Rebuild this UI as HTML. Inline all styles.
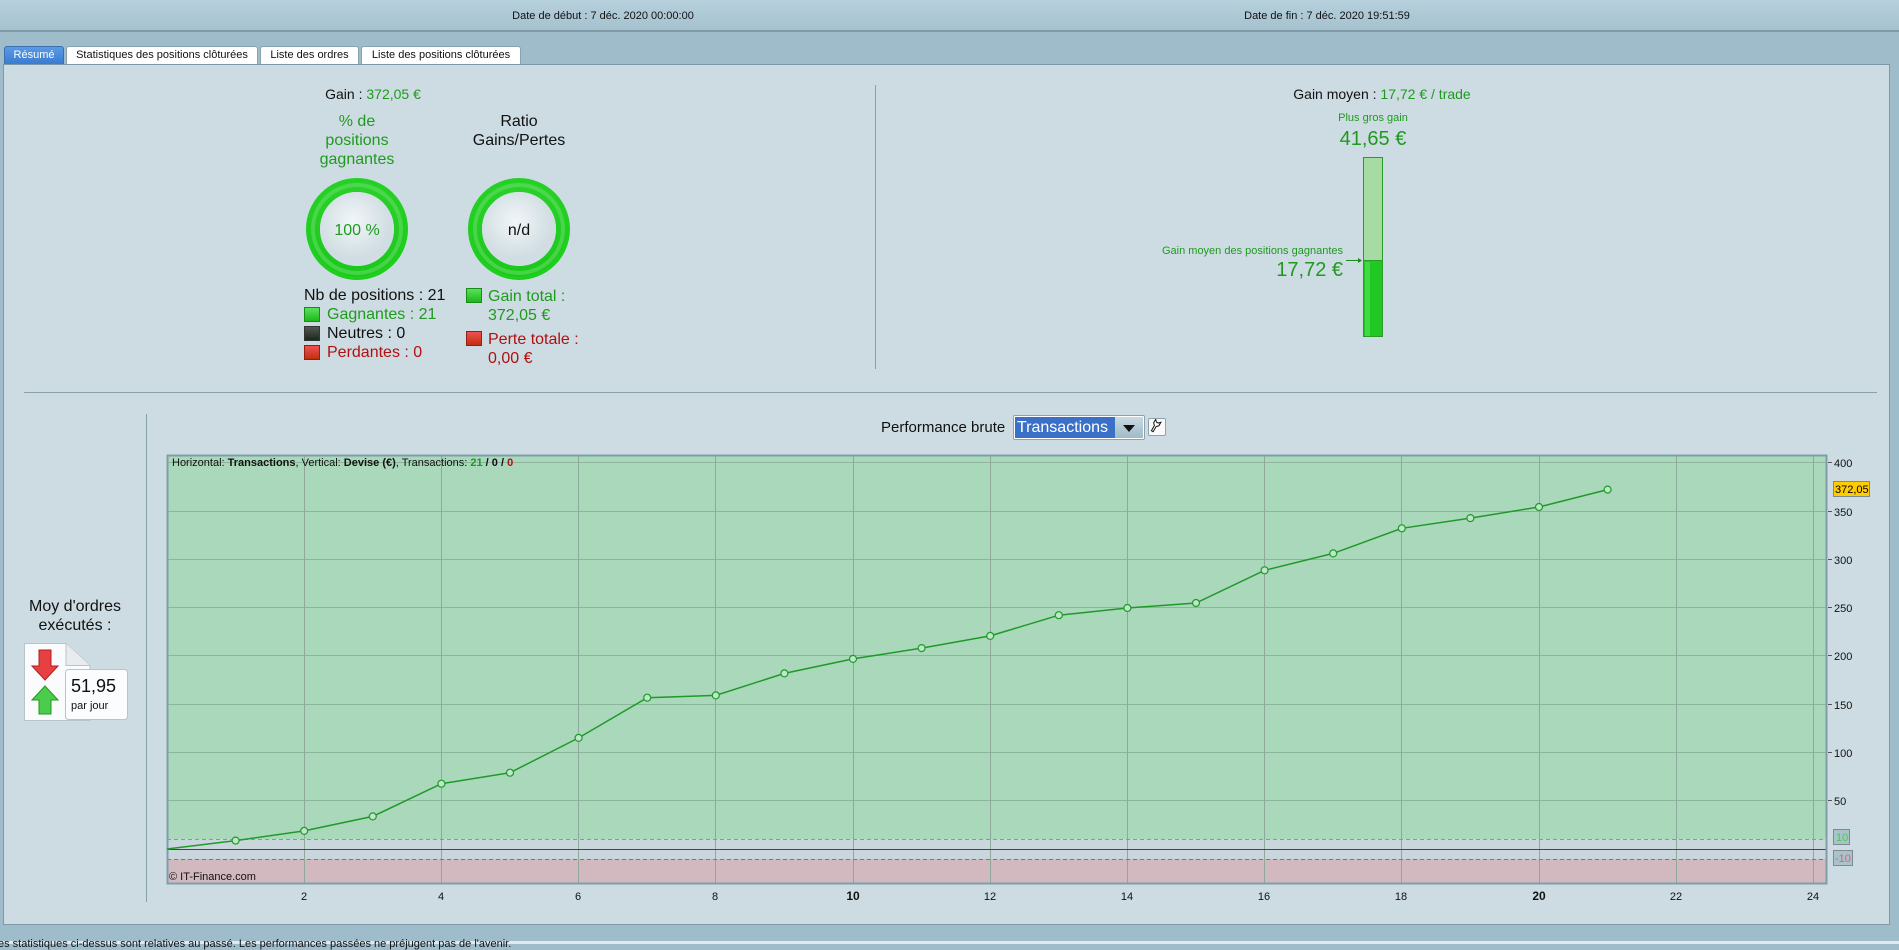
<!DOCTYPE html>
<html><head><meta charset="utf-8"><style>
*{margin:0;padding:0;box-sizing:border-box}
body{width:1899px;height:944px;overflow:hidden;background:#9fbccb;font-family:"Liberation Sans",sans-serif;position:relative;color:#111}
.a{position:absolute;white-space:nowrap}
.g{color:#1f9a1f}.r{color:#b01010}
.tab{position:absolute;top:46px;height:18px;background:#fff;border:1px solid #8aa3ad;border-bottom:none;border-radius:3px 3px 0 0;font-size:11px;text-align:center;line-height:17px}
.c{transform:translateX(-50%);text-align:center}
.sq{position:absolute;width:16px;height:15px;border:1px solid #333}
</style></head><body>
<div class="a" style="left:0;top:0;width:1899px;height:32px;background:linear-gradient(#b6d0dc,#a6c2cf);border-bottom:2px solid #7f9aa6"></div>
<div class="a c" style="left:603px;top:10px;font-size:11px">Date de début : 7 déc. 2020 00:00:00</div>
<div class="a c" style="left:1327px;top:10px;font-size:11px">Date de fin : 7 déc. 2020 19:51:59</div>
<div class="tab" style="left:4px;width:60px;background:linear-gradient(#5a9ae6,#3a7bd0);color:#fff;border-color:#3a6fb0">Résumé</div>
<div class="tab" style="left:66px;width:192px">Statistiques des positions clôturées</div>
<div class="tab" style="left:260px;width:99px">Liste des ordres</div>
<div class="tab" style="left:361px;width:160px">Liste des positions clôturées</div>
<div class="a" style="left:3px;top:64px;width:1887px;height:861px;background:#cddce2;border:1px solid #7f9aa6"></div>
<div class="a" style="left:0;top:941px;width:1899px;height:3px;background:#dfe9ee"></div>
<div class="a" style="left:-2px;top:939px;font-size:11px;line-height:11px">es statistiques ci-dessus sont relatives au passé. Les performances passées ne préjugent pas de l'avenir.</div>

<div class="a c" style="left:373px;top:86px;font-size:14px">Gain : <span class="g">372,05 €</span></div>
<div class="a c g" style="left:357px;top:112px;font-size:16px;line-height:19px">% de<br>positions<br>gagnantes</div>
<div class="a c" style="left:519px;top:112px;font-size:16px;line-height:19px">Ratio<br>Gains/Pertes</div>
<svg class="a" style="left:0;top:0" width="1899" height="944">
<defs><radialGradient id="in" cx="45%" cy="40%"><stop offset="0" stop-color="#f2f6f8"/><stop offset="1" stop-color="#d0dde2"/></radialGradient>
<linearGradient id="rg" x1="0" x2="0" y1="0" y2="1"><stop offset="0" stop-color="#2ad02a"/><stop offset="1" stop-color="#1cc81c"/></linearGradient></defs>
<circle cx="357" cy="229" r="44" fill="none" stroke="url(#rg)" stroke-width="14"/>
<circle cx="357" cy="229" r="44" fill="none" stroke="#6ee06e" stroke-width="4" opacity=".5"/>
<circle cx="357" cy="229" r="37" fill="url(#in)"/>
<circle cx="357" cy="229" r="49" fill="none" stroke="#1fd21f" stroke-width="3" opacity=".7"/>
<circle cx="519" cy="229" r="44" fill="none" stroke="url(#rg)" stroke-width="14"/>
<circle cx="519" cy="229" r="44" fill="none" stroke="#6ee06e" stroke-width="4" opacity=".5"/>
<circle cx="519" cy="229" r="37" fill="url(#in)"/>
<circle cx="519" cy="229" r="49" fill="none" stroke="#1fd21f" stroke-width="3" opacity=".7"/>
<text x="357" y="235" font-size="16" fill="#1f9a1f" text-anchor="middle" font-family="Liberation Sans">100 %</text>
<text x="519" y="235" font-size="16" fill="#111" text-anchor="middle" font-family="Liberation Sans">n/d</text>
<line x1="875.5" y1="85" x2="875.5" y2="369" stroke="#8aa0aa"/>
<line x1="24" y1="392.5" x2="1877" y2="392.5" stroke="#8aa0aa"/>
<line x1="146.5" y1="414" x2="146.5" y2="902" stroke="#8aa0aa"/>
<rect x="1363.5" y="157.5" width="19" height="103" fill="#a6dba4" stroke="#2a9a2a"/>
<rect x="1363.5" y="260.5" width="19" height="76" fill="#22c822" stroke="#2a9a2a"/>
<rect x="1365" y="262" width="5" height="74" fill="#44d844"/>
<line x1="1346" y1="260.5" x2="1361" y2="260.5" stroke="#1f8a1f"/><path d="M1358 258l4 2.5-4 2.5z" fill="#1f8a1f"/>
<rect x="167" y="455" width="1660" height="429" fill="#aad8bb"/>
<rect x="167" y="839" width="1660" height="20" fill="#c9d7dd"/>
<rect x="167" y="859" width="1660" height="25" fill="#d2b9c0"/>
<g stroke="#8cb59c" stroke-width="1">
<line x1="167" x2="1827" y1="800.5" y2="800.5"/><line x1="167" x2="1827" y1="752.5" y2="752.5"/><line x1="167" x2="1827" y1="704.5" y2="704.5"/><line x1="167" x2="1827" y1="655.5" y2="655.5"/><line x1="167" x2="1827" y1="607.5" y2="607.5"/><line x1="167" x2="1827" y1="559.5" y2="559.5"/><line x1="167" x2="1827" y1="511.5" y2="511.5"/><line x1="167" x2="1827" y1="462.5" y2="462.5"/>
</g>
<g stroke="#8fa89a" stroke-width="1">
<line x1="304.5" x2="304.5" y1="455" y2="884"/><line x1="441.5" x2="441.5" y1="455" y2="884"/><line x1="578.5" x2="578.5" y1="455" y2="884"/><line x1="715.5" x2="715.5" y1="455" y2="884"/><line x1="853.5" x2="853.5" y1="455" y2="884"/><line x1="990.5" x2="990.5" y1="455" y2="884"/><line x1="1127.5" x2="1127.5" y1="455" y2="884"/><line x1="1264.5" x2="1264.5" y1="455" y2="884"/><line x1="1401.5" x2="1401.5" y1="455" y2="884"/><line x1="1539.5" x2="1539.5" y1="455" y2="884"/><line x1="1676.5" x2="1676.5" y1="455" y2="884"/><line x1="1813.5" x2="1813.5" y1="455" y2="884"/>
</g>
<line x1="167" x2="1827" y1="839.5" y2="839.5" stroke="#3fd03f" stroke-dasharray="4 3"/>
<line x1="167" x2="1827" y1="859.5" y2="859.5" stroke="#e05050" stroke-dasharray="4 3"/>
<line x1="167" x2="1827" y1="849.5" y2="849.5" stroke="#2a3cc0"/>
<rect x="167.5" y="455.5" width="1659" height="428" fill="none" stroke="#7f9ea8" stroke-width="2"/>
<polyline fill="none" stroke="#1f9a2a" stroke-width="1.5" points="167,849 235.6,840.6 304.2,830.9 372.8,816.4 441.4,783.7 510,772.7 578.6,737.9 647.2,697.7 715.8,695.4 784.4,673.4 853,658.9 921.6,648.1 990.2,635.9 1058.8,615.2 1127.4,608 1196,603 1264.6,570.3 1333.2,553.4 1401.8,528.3 1470.4,518.1 1539,507 1607.6,489.6"/>
<g fill="#bfe6c8" stroke="#1f9a2a" stroke-width="1.2">
<circle cx="235.6" cy="840.6" r="3.5"/><circle cx="304.2" cy="830.9" r="3.5"/><circle cx="372.8" cy="816.4" r="3.5"/><circle cx="441.4" cy="783.7" r="3.5"/><circle cx="510" cy="772.7" r="3.5"/><circle cx="578.6" cy="737.9" r="3.5"/><circle cx="647.2" cy="697.7" r="3.5"/><circle cx="715.8" cy="695.4" r="3.5"/><circle cx="784.4" cy="673.4" r="3.5"/><circle cx="853" cy="658.9" r="3.5"/><circle cx="921.6" cy="648.1" r="3.5"/><circle cx="990.2" cy="635.9" r="3.5"/><circle cx="1058.8" cy="615.2" r="3.5"/><circle cx="1127.4" cy="608" r="3.5"/><circle cx="1196" cy="603" r="3.5"/><circle cx="1264.6" cy="570.3" r="3.5"/><circle cx="1333.2" cy="553.4" r="3.5"/><circle cx="1401.8" cy="528.3" r="3.5"/><circle cx="1470.4" cy="518.1" r="3.5"/><circle cx="1539" cy="507" r="3.5"/><circle cx="1607.6" cy="489.6" r="3.5"/>
</g>
<g stroke="#555"><line x1="1828" x2="1832" y1="462.5" y2="462.5"/><line x1="1828" x2="1832" y1="511.5" y2="511.5"/><line x1="1828" x2="1832" y1="559.5" y2="559.5"/><line x1="1828" x2="1832" y1="607.5" y2="607.5"/><line x1="1828" x2="1832" y1="655.5" y2="655.5"/><line x1="1828" x2="1832" y1="704.5" y2="704.5"/><line x1="1828" x2="1832" y1="752.5" y2="752.5"/><line x1="1828" x2="1832" y1="800.5" y2="800.5"/></g>
<g font-family="Liberation Sans" font-size="11" fill="#111">
<text x="1834" y="467">400</text><text x="1834" y="516">350</text><text x="1834" y="564">300</text><text x="1834" y="612">250</text><text x="1834" y="660">200</text><text x="1834" y="709">150</text><text x="1834" y="757">100</text><text x="1834" y="805">50</text>
<g text-anchor="middle"><text x="304" y="900">2</text><text x="441" y="900">4</text><text x="578" y="900">6</text><text x="715" y="900">8</text><text x="853" y="900" font-weight="bold" font-size="12">10</text><text x="990" y="900">12</text><text x="1127" y="900">14</text><text x="1264" y="900">16</text><text x="1401" y="900">18</text><text x="1539" y="900" font-weight="bold" font-size="12">20</text><text x="1676" y="900">22</text><text x="1813" y="900">24</text></g>
<text x="172" y="466">Horizontal: <tspan font-weight="bold">Transactions</tspan>, Vertical: <tspan font-weight="bold">Devise (€)</tspan>, Transactions: <tspan font-weight="bold" fill="#1f9a1f">21</tspan><tspan font-weight="bold"> / 0 / </tspan><tspan font-weight="bold" fill="#b01010">0</tspan></text>
<text x="169" y="880" font-size="11">© IT-Finance.com</text>
</g>
<rect x="1833.5" y="481.5" width="36" height="15" fill="#ffcc00" stroke="#7f8a90"/>
<text x="1835" y="493" font-size="11" font-family="Liberation Sans">372,05</text>
<rect x="1833.5" y="829.5" width="16" height="15" fill="#a9c3cc" stroke="#7f8a90"/>
<text x="1836" y="841" font-size="11" fill="#40d040" font-family="Liberation Sans">10</text>
<rect x="1833.5" y="850.5" width="19" height="15" fill="#a9c3cc" stroke="#7f8a90"/>
<text x="1835" y="862" font-size="11" fill="#e06070" font-family="Liberation Sans">-10</text>
<path d="M24.5 643.5H66l24 22V720.5H24.5z" fill="#fafbfc" stroke="#b8c4ca"/>
<path d="M66 643.5v22h24" fill="#e8ecee" stroke="#b8c4ca"/>
<path d="M39 650h12v16h7l-13 14-13-14h7z" fill="#e84040" stroke="#b02020"/>
<path d="M45 686l13 14h-7v14H39v-14h-7z" fill="#4ccc4c" stroke="#1f9a1f"/>
<rect x="65.5" y="669.5" width="62" height="50" rx="3" fill="#fbfcfd" stroke="#b8c4ca"/>
</svg>
<div class="a" style="left:71px;top:676px;font-size:18px">51,95</div>
<div class="a" style="left:71px;top:700px;font-size:11px">par jour</div>
<div class="a c" style="left:75px;top:597px;font-size:16px;line-height:19px">Moy d'ordres<br>exécutés :</div>

<div class="a" style="left:304px;top:287px;font-size:16px">Nb de positions : 21</div>
<div class="sq" style="left:304px;top:307px;background:linear-gradient(#5ce05c,#1cb81c);border-color:#1a8a1a"></div>
<div class="a g" style="left:327px;top:306px;font-size:16px">Gagnantes : 21</div>
<div class="sq" style="left:304px;top:326px;background:linear-gradient(#555,#1a2a1a)"></div>
<div class="a" style="left:327px;top:325px;font-size:16px">Neutres : 0</div>
<div class="sq" style="left:304px;top:345px;background:linear-gradient(#f05050,#c03010);border-color:#902010"></div>
<div class="a r" style="left:327px;top:344px;font-size:16px">Perdantes : 0</div>
<div class="sq" style="left:466px;top:288px;background:linear-gradient(#5ce05c,#1cb81c);border-color:#1a8a1a"></div>
<div class="a g" style="left:488px;top:287px;font-size:16px;line-height:19px">Gain total :<br>372,05 €</div>
<div class="sq" style="left:466px;top:331px;background:linear-gradient(#f05050,#c03010);border-color:#902010"></div>
<div class="a r" style="left:488px;top:330px;font-size:16px;line-height:19px">Perte totale :<br>0,00 €</div>

<div class="a c" style="left:1382px;top:86px;font-size:14px">Gain moyen : <span class="g">17,72 € / trade</span></div>
<div class="a c g" style="left:1373px;top:112px;font-size:11px">Plus gros gain</div>
<div class="a c g" style="left:1373px;top:128px;font-size:20px">41,65 €</div>
<div class="a g" style="right:556px;top:245px;font-size:11px">Gain moyen des positions gagnantes</div>
<div class="a g" style="right:556px;top:259px;font-size:20px">17,72 €</div>

<div class="a" style="left:881px;top:419px;font-size:15px">Performance brute</div>
<div class="a" style="left:1013px;top:415px;width:132px;height:25px;border:1px solid #8aa3ad;background:#fff;border-radius:2px"></div>
<div class="a" style="left:1015px;top:417px;width:100px;height:21px;background:#3a70c8;color:#fff;font-size:16px;line-height:21px;padding-left:2px">Transactions</div>
<div class="a" style="left:1115px;top:417px;width:28px;height:21px;background:linear-gradient(#c9dbe3,#9fbac6)"></div>
<svg class="a" style="left:1122px;top:424px" width="14" height="9"><path d="M1 1h12L7 8z" fill="#111"/></svg>
<div class="a" style="left:1148px;top:418px;width:18px;height:18px;border:1px solid #8aa3ad;background:#fafafa;border-radius:2px"></div>
<svg class="a" style="left:1149px;top:419px" width="16" height="16"><path d="M5 14V8L3 6V2l2 2h2l2-2v4L7 8v6z" fill="#fff" stroke="#111" stroke-width="1" transform="rotate(30 8 8)"/></svg>
</body></html>
